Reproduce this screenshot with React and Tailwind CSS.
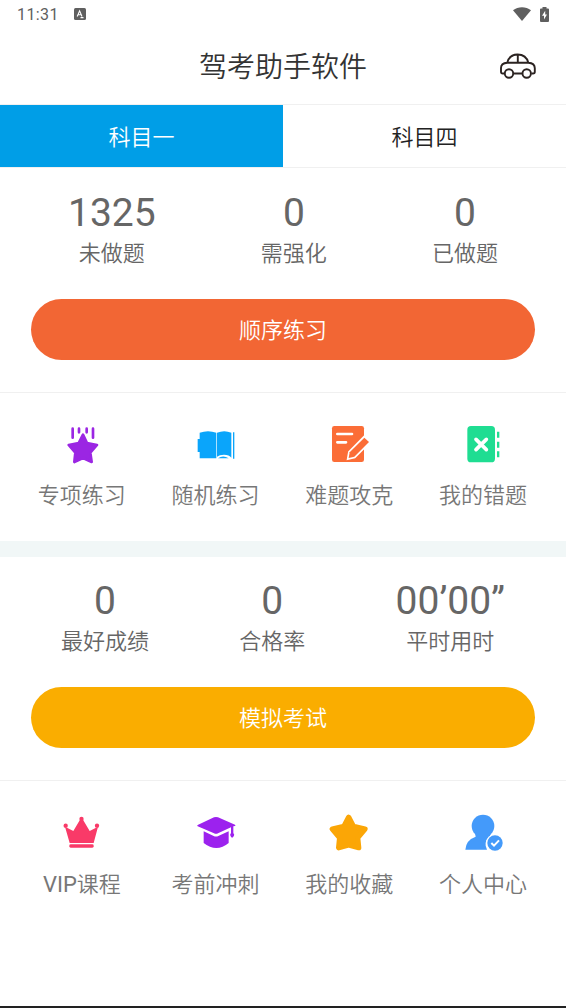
function StatusBar() {
  return (
    <div className="flex h-7 items-center justify-between pl-[17px] pr-[17px] text-[#5f5f5f]">
      <div className="flex items-center gap-[15px]">
        <span className="pt-[2px] text-base leading-7 tracking-[0.4px]">11:31</span>
        <svg width="12" height="12" viewBox="0 0 12 12">
          <rect width="12" height="12" rx="1.5" fill="#5f5f5f" />
          <path d="M3.2 8.5 5.6 2.8 8 8.5M4 6.8h3.2M6.5 9.6h3" fill="none" stroke="#fff" strokeWidth="1.1" />
        </svg>
      </div>
      <div className="flex items-center gap-[9px]">
        <svg width="18" height="14" viewBox="0 0 18 14">
          <path d="M0 3.2C5.2-.8 12.8-.8 18 3.2L9 14z" fill="currentColor" />
        </svg>
        <svg width="9" height="15" viewBox="0 0 9 15">
          <path d="M2.5 0h4v1.5H8a1 1 0 0 1 1 1V14a1 1 0 0 1-1 1H1a1 1 0 0 1-1-1V2.5a1 1 0 0 1 1-1h1.5z" fill="currentColor" />
          <path d="M5.2 3.8 2 8.7h2v3.7l3-5H5.2z" fill="#fff" />
        </svg>
      </div>
    </div>
  );
}

function CarIcon() {
  return (
    <svg width="36" height="26" viewBox="0 0 36 26" fill="none" stroke="#2b2321" strokeWidth="1.9" strokeLinejoin="round">
      <path d="M4.5 20.5H2.8C1.5 20.5 1 19.8 1 18.7V15c0-3.2 2.2-4.9 6.2-5.2C8.500 4.500 11 1.500 17.500 1.500S27 4.500 28.300 9.800c4.500.3 6.500 2.300 6.500 5.500v3.400c0 1.200-.6 1.800-1.800 1.800h-1.700M13.500 20.500h9M7.200 9.800h21.100M17.800 1.500v8.300" />
      <circle cx="9" cy="20.5" r="4.2" />
      <circle cx="26.7" cy="20.5" r="4.2" />
    </svg>
  );
}

function ShootingStarIcon() {
  return (
    <svg width="48" height="48" viewBox="24 18 144 144" fill="#9b26e3" stroke="#9b26e3" strokeLinecap="round" strokeLinejoin="round">
      <path d="M68 41v27M87 41v11M110 41v11M129 41v27" strokeWidth="8" />
      <path d="m99 59 12 25 30 6-20 23 4 28-26-12-26 12 3-28-20-23 30-6z" strokeWidth="8" />
    </svg>
  );
}

function BookIcon() {
  return (
    <svg width="48" height="48" viewBox="20 18 144 144" fill="#0aa5fb">
      <path d="M43 53q25-9 50 0v77H43v-19h-6V72h6z" />
      <path d="M95 53q22-9 43 0v75q-6-9-22-9-14 0-21 6z" />
      <path d="M98 130q15-11 32 0z" />
      <path d="M143 52h4v79h-4z" />
    </svg>
  );
}

function NoteIcon() {
  return (
    <svg width="48" height="48" viewBox="31 18 144 144">
      <rect x="52" y="33" width="96" height="108" rx="7" fill="#fb6d37" />
      <path d="M68 57h44M68 82h26" stroke="#fff" strokeWidth="8" strokeLinecap="round" />
      <path d="m148 68 15 13-44 44-17 4 3-17z" fill="#fff" stroke="#fff" strokeWidth="10" />
      <path d="m149 68 14 13-44 44-17 4 3-17z" fill="#fb6d37" />
    </svg>
  );
}

function WrongBookIcon() {
  return (
    <svg width="48" height="48" viewBox="27 18 144 144">
      <rect x="52" y="33" width="83" height="109" rx="11" fill="#1fdd92" />
      <path d="m78 73 31 31M109 73l-31 31" stroke="#fff" strokeWidth="11" strokeLinecap="round" />
      <path d="M141 50h7v18h-7zM141 80h7v18h-7zM141 109h7v18h-7z" fill="#1fdd92" />
    </svg>
  );
}

function CrownIcon() {
  return (
    <svg width="48" height="48" viewBox="24 18 144 144" fill="#f93a68">
      <path d="m45 68 25 13 20-34h9l20 34 25-13-13 49H59z" />
      <circle cx="47" cy="65" r="6.5" />
      <circle cx="94.5" cy="45" r="6.5" />
      <circle cx="141" cy="65" r="6.5" />
      <rect x="58" y="121" width="73" height="10" rx="4" />
    </svg>
  );
}

function GraduationIcon() {
  return (
    <svg width="48" height="48" viewBox="20 18 144 144" fill="#9c22ee">
      <path d="M37 63 86 40q6-2 12 0l51 22q3 2 0 4l-5 1v20q5 5 1 10-5 8-9 0-4-5 1-10V70L98 88q-6 3-12 0L37 67q-3-2 0-4z" />
      <path d="m55 82 30 14q7 3 14 0l31-14v35q-18 15-37 15t-38-15z" />
    </svg>
  );
}

function StarIcon() {
  return (
    <svg width="48" height="48" viewBox="31 16 144 144">
      <path d="m102 38 14 27 35 8-22 26 3 30-30-8-30 8 3-30-22-26 35-8z" fill="#fba606" stroke="#fba606" strokeWidth="16" strokeLinejoin="round" />
    </svg>
  );
}

function UserIcon() {
  return (
    <svg width="48" height="48" viewBox="27 16 144 144" fill="#449afa">
      <circle cx="99" cy="64" r="34" />
      <path d="M75 85h48l-4 12q-14 8-12 26l4 12H46q2-29 31-39z" />
      <circle cx="135" cy="115" r="27" fill="#fff" />
      <circle cx="135" cy="115" r="23" />
      <path d="m124 115 8 8 15-16" fill="none" stroke="#fff" strokeWidth="6" />
    </svg>
  );
}

const practiceStats = [
  { value: "1325", label: "未做题" },
  { value: "0", label: "需强化" },
  { value: "0", label: "已做题" },
];

const examStats = [
  { value: "0", label: "最好成绩" },
  { value: "0", label: "合格率" },
  { value: "00’00”", label: "平时用时" },
];

const practiceMenu = [
  { icon: ShootingStarIcon, label: "专项练习" },
  { icon: BookIcon, label: "随机练习" },
  { icon: NoteIcon, label: "难题攻克" },
  { icon: WrongBookIcon, label: "我的错题" },
];

const examMenu = [
  { icon: CrownIcon, label: <><span className="font-normal">VIP</span>课程</> },
  { icon: GraduationIcon, label: "考前冲刺" },
  { icon: StarIcon, label: "我的收藏" },
  { icon: UserIcon, label: "个人中心" },
];

function Stats({ items, className }) {
  return (
    <div className={`flex justify-between text-[#666] ${className}`}>
      {items.map((item) => (
        <div key={item.label} className="flex flex-col items-center">
          <span className="text-[39px] leading-[47px]">{item.value}</span>
          <span className="text-[22px] leading-[34px] font-[350]">{item.label}</span>
        </div>
      ))}
    </div>
  );
}

function Menu({ items, className }) {
  return (
    <div className={`grid grid-cols-4 border-t border-[#f0f0f0] pl-[15px] pr-[16px] ${className}`}>
      {items.map(({ icon: Icon, label }, i) => (
        <button key={i} className="flex flex-col items-center">
          <Icon />
          <span className="mt-[11px] text-[22px] leading-8 font-[350] text-[#777]">{label}</span>
        </button>
      ))}
    </div>
  );
}

function App() {
  return (
    <div className="flex h-[1008px] w-full flex-col bg-white font-[Roboto,'Noto_Sans_CJK_SC',sans-serif]">
      <StatusBar />
      <header className="relative flex h-[76px] items-center justify-center">
        <h1 className="pt-1 text-[28px] font-[350] text-[#333]">驾考助手软件</h1>
        <button className="absolute right-[30px] top-[25px]">
          <CarIcon />
        </button>
      </header>

      <div className="grid h-16 grid-cols-2 border-y border-[#f0f0f0] text-[22px] font-[350]">
        <button className="bg-[#009ee7] pt-[2px] text-white">科目一</button>
        <button className="pt-[2px] text-[#222]">科目四</button>
      </div>

      <section className="h-[373px]">
        <Stats items={practiceStats} className="h-[131px] px-[68px] pt-[22px]" />
        <button className="mx-[31px] mb-8 block h-[61px] w-[504px] rounded-full bg-[#f26634] pt-[2px] text-[22px] font-[350] text-white">顺序练习</button>
        <Menu items={practiceMenu} className="h-[149px] pt-7" />
      </section>

      <div className="h-4 bg-[#f1f7f7]" />

      <section>
        <Stats items={examStats} className="h-[130px] px-[61px] pt-[21px]" />
        <button className="mx-[31px] mb-8 block h-[61px] w-[504px] rounded-full bg-[#faad00] pt-[2px] text-[22px] font-[350] text-white">模拟考试</button>
        <Menu items={examMenu} className="h-[149px] pt-[29px]" />
      </section>

      <div className="mt-auto h-[2px] bg-[#222]" />
    </div>
  );
}

export default App;
